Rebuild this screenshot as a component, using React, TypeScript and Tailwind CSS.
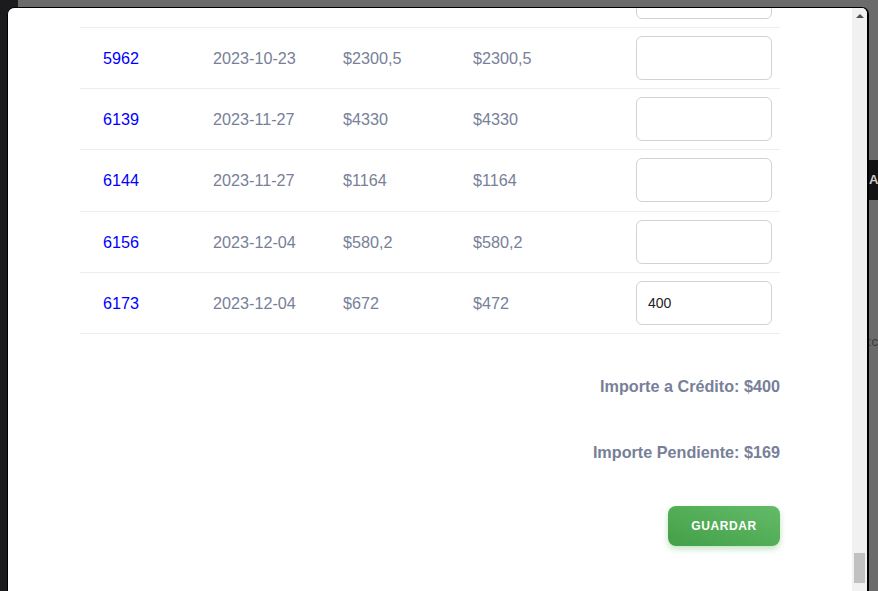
import React from "react";

const rows = [
  { id: "", date: "", amount: "", pending: "", value: "" },
  { id: "5962", date: "2023-10-23", amount: "$2300,5", pending: "$2300,5", value: "" },
  { id: "6139", date: "2023-11-27", amount: "$4330", pending: "$4330", value: "" },
  { id: "6144", date: "2023-11-27", amount: "$1164", pending: "$1164", value: "" },
  { id: "6156", date: "2023-12-04", amount: "$580,2", pending: "$580,2", value: "" },
  { id: "6173", date: "2023-12-04", amount: "$672", pending: "$472", value: "400" },
];

function Row({ r, first }: { r: (typeof rows)[number]; first?: boolean }) {
  return (
    <div
      className={
        "grid h-[61.2px] grid-cols-[133px_130px_130px_163px_144px] items-center border-b border-[#ececec] " +
        (first ? "-mt-[41.2px]" : "")
      }
    >
      <a className="pl-[23px] text-[#0000ff]">{r.id}</a>
      <span>{r.date}</span>
      <span>{r.amount}</span>
      <span>{r.pending}</span>
      <div className="flex justify-end pr-[8px]">
        <input
          defaultValue={r.value}
          className="h-[44px] w-[136px] rounded-[6px] border border-[#d2d2d6] bg-white px-[11px] text-[14px] text-[#222] outline-none"
        />
      </div>
    </div>
  );
}

export default function App() {
  return (
    <div className="relative h-[591px] w-[878px] overflow-hidden bg-[#6b6b6b] font-['Liberation_Sans',Arial,sans-serif]">
      {/* page behind the overlay */}
      <div className="absolute left-0 top-0 h-full w-[18px] bg-[#1b1b1d]" />
      <div className="absolute right-0 top-[160px] flex h-[40px] w-[10px] items-center bg-[#121212] pl-[1px] text-[13px] font-bold text-[#c8c8c8]">
        A
      </div>
      <div className="absolute right-0 top-[332px] w-[10px] overflow-hidden text-[13px] text-[#3a3a3a]">
        :c
      </div>

      {/* modal */}
      <div className="absolute left-[7px] top-[7px] flex h-[600px] w-[862px] overflow-hidden rounded-t-[7px] border-l border-r-2 border-t border-black bg-white">
        <div className="flex-1 overflow-hidden px-[72px] text-[16.2px] text-[#787f99]">
          {rows.map((r, i) => (
            <Row key={i} r={r} first={i === 0} />
          ))}

          <div className="flex flex-col items-end font-bold">
            <p className="mt-[43px] leading-[18px]">Importe a Crédito: $400</p>
            <p className="mt-[48px] leading-[18px]">Importe Pendiente: $169</p>
            <button className="mt-[45px] h-[40px] w-[112px] rounded-[8px] bg-gradient-to-tr from-[#43a047] to-[#63bb68] text-[12px] font-bold tracking-[0.05em] text-white shadow-[0_3px_6px_rgba(76,175,80,0.35)]">
              GUARDAR
            </button>
          </div>
        </div>

        {/* scrollbar */}
        <div className="flex w-[15px] flex-col items-center bg-[#f1f1f1]">
          <div className="mt-[6px] h-0 w-0 border-x-[4px] border-b-[4px] border-x-transparent border-b-[#505050]" />
          <div className="mt-[535px] h-[30px] w-[11px] bg-[#c1c1c1]" />
        </div>
      </div>
    </div>
  );
}
